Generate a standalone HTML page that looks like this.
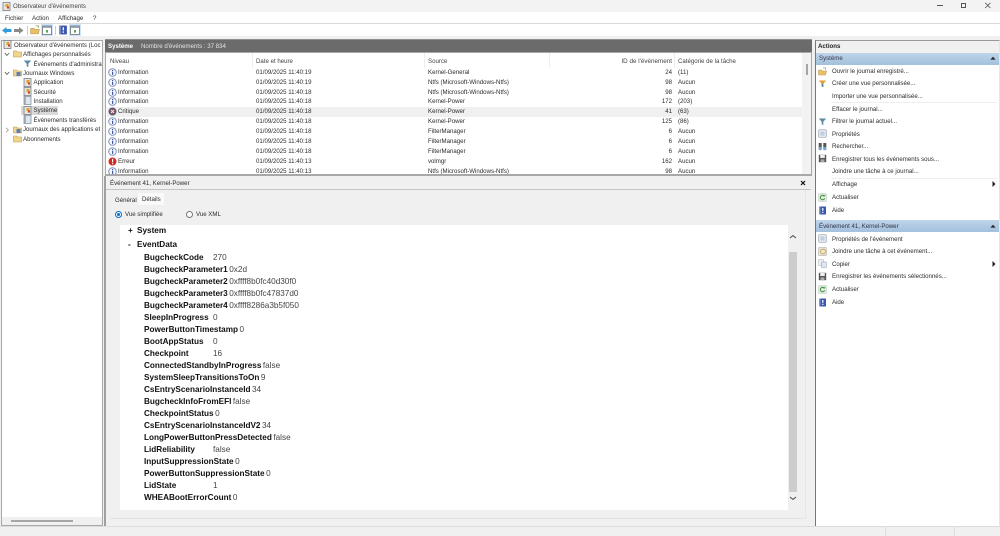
<!DOCTYPE html>
<html lang="fr"><head><meta charset="utf-8"><title>Observateur d'événements</title>
<style>
html,body{margin:0;padding:0;width:1000px;height:536px;overflow:hidden;background:#f0f0f0}
body{font-family:"Liberation Sans",sans-serif;font-size:6.1px;color:#2c2c2c;position:relative;filter:blur(.25px)}
.a,.a *{box-sizing:border-box}
.a{position:absolute;white-space:nowrap}
.t{position:absolute;white-space:nowrap;line-height:10px;height:10px}
svg.i{position:absolute;width:9px;height:9px}
.r{position:absolute;left:0;right:0;height:10px}
.r .t{top:0}
.c1{left:12px}.c2{left:150px}.c3{left:322px}.c5{left:572px}
.d{position:absolute;left:144px;height:12px;line-height:12px;white-space:nowrap;font-size:8.2px;color:#444}
.d b{display:inline-block;min-width:67.5px;color:#111;margin-right:1.5px}
</style></head><body>
<svg width="0" height="0" style="position:absolute"><defs>
<symbol id="info" viewBox="0 0 9 9"><circle cx="4.5" cy="4.5" r="3.8" fill="#f4f6fb" stroke="#7f90b8" stroke-width="1"/><rect x="4" y="2" width="1.2" height="1.1" fill="#3f5a9c"/><rect x="4" y="3.8" width="1.2" height="3.1" fill="#3f5a9c"/></symbol>
<symbol id="crit" viewBox="0 0 9 9"><circle cx="4.5" cy="4.5" r="4" fill="#5b5f78"/><circle cx="4.5" cy="4.5" r="2.2" fill="#b03a4c"/><path d="M3 3l3 3M6 3l-3 3" stroke="#eee" stroke-width=".9"/></symbol>
<symbol id="err" viewBox="0 0 9 9"><circle cx="4.5" cy="4.5" r="4" fill="#d42a20"/><rect x="4" y="1.8" width="1.2" height="3.4" fill="#fff"/><rect x="4" y="6" width="1.2" height="1.2" fill="#fff"/></symbol>
<symbol id="log" viewBox="0 0 9 9"><rect x="1" y="0.5" width="7" height="8" fill="#dfe6ee" stroke="#8a93a0" stroke-width=".8"/><rect x="1.4" y="1" width="1.4" height="7" fill="#9aa5b3"/></symbol>
<symbol id="logw" viewBox="0 0 9 9"><rect x="1" y="0.5" width="7" height="8" fill="#e8e4d8" stroke="#77808c" stroke-width=".8"/><rect x="3.5" y="2" width="3" height="3" fill="#d8a33c"/><rect x="5" y="4.5" width="2" height="2" fill="#c8392c"/></symbol>
<symbol id="fold" viewBox="0 0 9 9"><path d="M.5 2h3l1 1h4v5h-8z" fill="#f0d68a" stroke="#b99a4e" stroke-width=".6"/></symbol>
<symbol id="foldb" viewBox="0 0 9 9"><path d="M.5 2h3l1 1h4v5h-8z" fill="#f0d68a" stroke="#b99a4e" stroke-width=".6"/><rect x="3.5" y="4" width="4" height="4" fill="#5c7fb8"/></symbol>
<symbol id="filt" viewBox="0 0 9 9"><path d="M.8 1.5h7.4L5.3 4.8V8.2L3.7 7.2V4.8z" fill="#5e8aa8"/></symbol>
<symbol id="filty" viewBox="0 0 9 9"><path d="M.8 1.5h7.4L5.3 4.8V8.2L3.7 7.2V4.8z" fill="#e0a030"/><path d="M3.7 4.8h1.6v3.4l-1.6-1z" fill="#4f7d9b"/></symbol>
<symbol id="open" viewBox="0 0 9 9"><path d="M.5 3h3l1 1h4l-1 4h-7z" fill="#e8c068" stroke="#b99a4e" stroke-width=".5"/><path d="M5 .8h2.5v2" fill="none" stroke="#8aa04a" stroke-width=".7"/></symbol>
<symbol id="prop" viewBox="0 0 9 9"><rect x=".7" y=".7" width="7.6" height="7.6" rx="1" fill="#e4e8ee" stroke="#9aa4b0" stroke-width=".7"/><rect x="2.5" y="2.5" width="4" height="4" fill="#bcd0e0"/></symbol>
<symbol id="find" viewBox="0 0 9 9"><rect x=".7" y="1" width="3" height="4.5" fill="#555"/><rect x="5.3" y="1" width="3" height="4.5" fill="#555"/><circle cx="2.2" cy="6.6" r="1.7" fill="#7ba4cc"/><circle cx="6.8" cy="6.6" r="1.7" fill="#7ba4cc"/></symbol>
<symbol id="save" viewBox="0 0 9 9"><rect x=".8" y=".8" width="7.4" height="7.4" fill="#555"/><rect x="2.2" y="1" width="4.6" height="3" fill="#eee"/><rect x="2.6" y="5.4" width="3.8" height="2.8" fill="#aaa"/></symbol>
<symbol id="ref" viewBox="0 0 9 9"><rect x=".8" y=".8" width="7.4" height="7.4" fill="#e6eee6" stroke="#b5bdb5" stroke-width=".6"/><path d="M6.4 3.3A2.2 2.2 0 1 0 6.6 5.4" fill="none" stroke="#3f9a3f" stroke-width="1.1"/><path d="M5 3.4h2.2V1.6z" fill="#3f9a3f"/></symbol>
<symbol id="help" viewBox="0 0 9 9"><rect x="1" y=".5" width="7" height="8" fill="#3b58b0"/><rect x="1" y=".5" width="1.5" height="8" fill="#7f94d4"/><rect x="4.2" y="2" width="1.2" height="2.8" fill="#fff"/><rect x="4.2" y="5.8" width="1.2" height="1.2" fill="#fff"/></symbol>
<symbol id="task" viewBox="0 0 9 9"><rect x=".7" y=".7" width="7.6" height="7.6" fill="#e4e4dc" stroke="#a9a99c" stroke-width=".6"/><circle cx="5" cy="4.5" r="2.4" fill="#f3e7c4" stroke="#c08c3c" stroke-width=".7"/></symbol>
<symbol id="copy" viewBox="0 0 9 9"><rect x=".7" y=".7" width="4.6" height="5.6" fill="#eef0f4" stroke="#aab0bc" stroke-width=".6"/><rect x="3.5" y="3" width="4.8" height="5.4" fill="#dfe6f2" stroke="#9aa6bc" stroke-width=".6"/></symbol>
<symbol id="pane" viewBox="0 0 12 12"><rect x="0" y="0" width="12" height="12" fill="#cfe4f7"/><rect x="1.5" y="2" width="9" height="8.5" fill="#fff" stroke="#66727e" stroke-width=".8"/><rect x="1.5" y="2" width="9" height="1.8" fill="#8a97a5"/><rect x="5" y="6" width="2" height="2.6" fill="#5aa85a"/></symbol>
</defs></svg>

<!-- title bar -->
<div class="a" style="left:0;top:0;width:1000px;height:12px;background:#f3f3f3"></div>
<svg class="i" style="left:2px;top:2px"><use href="#logw"/></svg>
<div class="t" style="left:13px;top:2px;color:#444">Observateur d'événements</div>
<div class="a" style="left:937px;top:5px;width:6px;height:1px;background:#555"></div>
<div class="a" style="left:961px;top:3px;width:5px;height:5px;border:1px solid #555;background:#f3f3f3"></div>
<svg class="a" style="left:984px;top:2px" width="8" height="7"><path d="M1.2.8l5.2 5.2M6.4.8L1.2 6" stroke="#555" stroke-width=".8"/></svg>

<!-- menu -->
<div class="a" style="left:0;top:12px;width:1000px;height:12px;background:#fff;border-bottom:1px solid #d9d9d9"></div>
<div class="t" style="left:5px;top:14px">Fichier</div>
<div class="t" style="left:32px;top:14px">Action</div>
<div class="t" style="left:58px;top:14px">Affichage</div>
<div class="t" style="left:93px;top:14px">?</div>

<!-- toolbar -->
<div class="a" style="left:0;top:24px;width:1000px;height:12px;background:#fff"></div>
<svg class="a" style="left:2px;top:26px" width="10" height="9"><path d="M0 4.5L4.5 1v2h5v3h-5v2z" fill="#2f9bd8"/></svg>
<svg class="a" style="left:14px;top:26px" width="10" height="9"><path d="M9.5 4.5L5 1v2H0v3h5v2z" fill="#8a8a8a"/></svg>
<div class="a" style="left:27px;top:26px;width:1px;height:9px;background:#ccc"></div>
<svg class="a" style="left:30px;top:25px;width:10px;height:10px"><use href="#open"/></svg>
<svg class="a" style="left:41px;top:24px;width:12px;height:12px"><use href="#pane"/></svg>
<div class="a" style="left:55px;top:26px;width:1px;height:9px;background:#ccc"></div>
<svg class="a" style="left:58px;top:25px;width:10px;height:10px"><use href="#help"/></svg>
<svg class="a" style="left:69px;top:24px;width:12px;height:12px"><use href="#pane"/></svg>

<!-- left tree -->
<div class="a" style="left:1px;top:40px;width:102px;height:486px;background:#fff;border:1px solid #a8a8a8">
  <div class="a" style="left:0;bottom:0;width:100px;height:8px;background:#f0f0f0"></div>
  <div class="a" style="left:9px;bottom:3px;width:62px;height:2px;background:#a6a6a6"></div>
</div>
<svg class="i" style="left:3px;top:40px"><use href="#logw"/></svg><div class="t" style="left:14px;top:41px">Observateur d'événements (Loc</div>
<svg class="a" style="left:4px;top:52px" width="6" height="5"><path d="M.8 1l2.2 2.4L5.2 1" fill="none" stroke="#555" stroke-width=".8"/></svg>
<svg class="i" style="left:13px;top:49px"><use href="#fold"/></svg><div class="t" style="left:23px;top:50px">Affichages personnalisés</div>
<svg class="i" style="left:23px;top:59px"><use href="#filt"/></svg><div class="t" style="left:33.5px;top:60px">Événements d'administra</div>
<svg class="a" style="left:4px;top:71px" width="6" height="5"><path d="M.8 1l2.2 2.4L5.2 1" fill="none" stroke="#555" stroke-width=".8"/></svg>
<svg class="i" style="left:13px;top:68px"><use href="#foldb"/></svg><div class="t" style="left:23px;top:69px">Journaux Windows</div>
<svg class="i" style="left:23px;top:78px"><use href="#logw"/></svg><div class="t" style="left:33.5px;top:78px">Application</div>
<svg class="i" style="left:23px;top:87px"><use href="#logw"/></svg><div class="t" style="left:33.5px;top:88px">Sécurité</div>
<svg class="i" style="left:23px;top:96px"><use href="#log"/></svg><div class="t" style="left:33.5px;top:97px">Installation</div>
<div class="a" style="left:21px;top:106px;width:37px;height:9px;background:#d9d9d9"></div>
<svg class="i" style="left:23px;top:106px"><use href="#logw"/></svg><div class="t" style="left:33.5px;top:106px">Système</div>
<svg class="i" style="left:23px;top:115px"><use href="#log"/></svg><div class="t" style="left:33.5px;top:116px">Événements transférés</div>
<svg class="a" style="left:5px;top:127px" width="5" height="6"><path d="M1 .8l2.4 2.2L1 5.2" fill="none" stroke="#999" stroke-width=".8"/></svg>
<svg class="i" style="left:13px;top:125px"><use href="#foldb"/></svg><div class="t" style="left:23px;top:125px">Journaux des applications et</div>
<svg class="i" style="left:13px;top:134px"><use href="#fold"/></svg><div class="t" style="left:23px;top:135px">Abonnements</div>

<!-- center header -->
<div class="a" style="left:105px;top:39px;width:707px;height:13px;background:#6b6b6b;border-top:1px solid #8f8f8f"></div>
<div class="t" style="left:108px;top:42px;color:#fff;font-weight:bold">Système</div>
<div class="t" style="left:141px;top:42px;color:#e4e4e4">Nombre d'événements : 37 834</div>

<!-- list -->
<div class="a" style="left:105px;top:52px;width:707px;height:122px;background:#fff;border:1px solid #a8a8a8;border-bottom:0;overflow:hidden">
  <div class="t" style="left:4px;top:4px;color:#444">Niveau</div>
  <div class="a" style="left:146px;top:0;width:1px;height:15px;background:#eee"></div>
  <div class="t" style="left:150px;top:4px;color:#444">Date et heure</div>
  <div class="a" style="left:318px;top:0;width:1px;height:15px;background:#eee"></div>
  <div class="t" style="left:322px;top:4px;color:#444">Source</div>
  <div class="a" style="left:443px;top:0;width:1px;height:15px;background:#eee"></div>
  <div class="t" style="right:139px;top:4px;color:#444;font-size:6.3px">ID de l'événement</div>
  <div class="a" style="left:568px;top:0;width:1px;height:15px;background:#eee"></div>
  <div class="t" style="left:572px;top:4px;color:#444">Catégorie de la tâche</div>
  <div class="a" style="left:696px;top:0;width:9px;height:122px;background:#f2f2f2"></div>
  <div class="a" style="left:700px;top:11px;width:2px;height:11px;background:#a6a6a6"></div>
  <div class="a" style="left:1px;top:54px;width:695px;height:10px;background:#f0f0f0"></div>
</div>
<div class="a" style="left:105px;top:174px;width:707px;height:2px;background:#a8a8a8"></div>
<div class="a" style="left:106px;top:68px;width:696px;height:106px;overflow:hidden">
  <div class="r" style="top:-0.5px"><svg class="i" style="left:2px"><use href="#info"/></svg><div class="t c1">Information</div><div class="t c2">01/09/2025 11:40:19</div><div class="t c3">Kernel-General</div><div class="t" style="right:130px">24</div><div class="t c5">(11)</div></div>
  <div class="r" style="top:10px"><svg class="i" style="left:2px"><use href="#info"/></svg><div class="t c1">Information</div><div class="t c2">01/09/2025 11:40:19</div><div class="t c3">Ntfs (Microsoft-Windows-Ntfs)</div><div class="t" style="right:130px">98</div><div class="t c5">Aucun</div></div>
  <div class="r" style="top:20px"><svg class="i" style="left:2px"><use href="#info"/></svg><div class="t c1">Information</div><div class="t c2">01/09/2025 11:40:18</div><div class="t c3">Ntfs (Microsoft-Windows-Ntfs)</div><div class="t" style="right:130px">98</div><div class="t c5">Aucun</div></div>
  <div class="r" style="top:29px"><svg class="i" style="left:2px"><use href="#info"/></svg><div class="t c1">Information</div><div class="t c2">01/09/2025 11:40:18</div><div class="t c3">Kernel-Power</div><div class="t" style="right:130px">172</div><div class="t c5">(203)</div></div>
  <div class="r" style="top:39px"><svg class="i" style="left:2px"><use href="#crit"/></svg><div class="t c1">Critique</div><div class="t c2">01/09/2025 11:40:18</div><div class="t c3">Kernel-Power</div><div class="t" style="right:130px">41</div><div class="t c5">(63)</div></div>
  <div class="r" style="top:49px"><svg class="i" style="left:2px"><use href="#info"/></svg><div class="t c1">Information</div><div class="t c2">01/09/2025 11:40:18</div><div class="t c3">Kernel-Power</div><div class="t" style="right:130px">125</div><div class="t c5">(86)</div></div>
  <div class="r" style="top:59px"><svg class="i" style="left:2px"><use href="#info"/></svg><div class="t c1">Information</div><div class="t c2">01/09/2025 11:40:18</div><div class="t c3">FilterManager</div><div class="t" style="right:130px">6</div><div class="t c5">Aucun</div></div>
  <div class="r" style="top:69px"><svg class="i" style="left:2px"><use href="#info"/></svg><div class="t c1">Information</div><div class="t c2">01/09/2025 11:40:18</div><div class="t c3">FilterManager</div><div class="t" style="right:130px">6</div><div class="t c5">Aucun</div></div>
  <div class="r" style="top:79px"><svg class="i" style="left:2px"><use href="#info"/></svg><div class="t c1">Information</div><div class="t c2">01/09/2025 11:40:18</div><div class="t c3">FilterManager</div><div class="t" style="right:130px">6</div><div class="t c5">Aucun</div></div>
  <div class="r" style="top:89px"><svg class="i" style="left:2px"><use href="#err"/></svg><div class="t c1">Erreur</div><div class="t c2">01/09/2025 11:40:13</div><div class="t c3">volmgr</div><div class="t" style="right:130px">162</div><div class="t c5">Aucun</div></div>
  <div class="r" style="top:99px"><svg class="i" style="left:2px"><use href="#info"/></svg><div class="t c1">Information</div><div class="t c2">01/09/2025 11:40:13</div><div class="t c3">Ntfs (Microsoft-Windows-Ntfs)</div><div class="t" style="right:130px">98</div><div class="t c5">Aucun</div></div>
</div>

<!-- detail -->
<div class="a" style="left:104px;top:176px;width:2px;height:350px;background:#a0a0a0"></div>
<div class="a" style="left:110px;top:518px;width:695px;height:1px;background:#e2e2e2"></div>
<div class="a" style="left:805px;top:190px;width:1px;height:329px;background:#e6e6e6"></div>
<div class="a" style="left:106px;top:189px;width:705px;height:1px;background:#c4c4c4"></div>
<div class="t" style="left:110px;top:179px">Événement 41, Kernel-Power</div>
<svg class="a" style="left:800px;top:180px" width="6" height="6"><path d="M1 1l4 4M5 1L1 5" stroke="#111" stroke-width="1.2"/></svg>
<div class="t" style="left:115px;top:196px">Général</div>
<div class="a" style="left:138px;top:193px;width:26px;height:12px;background:#fafafa"></div>
<div class="t" style="left:142px;top:195px">Détails</div>
<div class="a" style="left:115px;top:211px;width:7px;height:7px;border-radius:50%;border:1px solid #0a6cc0;background:#fff"></div>
<div class="a" style="left:117px;top:213px;width:3px;height:3px;border-radius:50%;background:#0a6cc0"></div>
<div class="t" style="left:125px;top:210px">Vue simplifiée</div>
<div class="a" style="left:186px;top:211px;width:7px;height:7px;border-radius:50%;border:1px solid #777;background:#fff"></div>
<div class="t" style="left:196px;top:210px">Vue XML</div>

<div class="a" style="left:120px;top:225px;width:668px;height:285px;background:#fff"></div>
<div class="a" style="left:789px;top:252px;width:8px;height:240px;background:#cdcdcd"></div>
<svg class="a" style="left:789px;top:234px" width="8" height="6"><path d="M1 4l3-2.4L7 4" fill="none" stroke="#555" stroke-width="1.1"/></svg>
<svg class="a" style="left:789px;top:495px" width="8" height="6"><path d="M1 2l3 2.4L7 2" fill="none" stroke="#555" stroke-width="1.1"/></svg>

<div class="t" style="left:128px;top:226px;font-size:8.2px;font-weight:bold;color:#111">+</div>
<div class="t" style="left:137px;top:226px;font-size:8.2px;font-weight:bold;color:#111">System</div>
<div class="t" style="left:128px;top:240px;font-size:8.2px;font-weight:bold;color:#111">-</div>
<div class="t" style="left:137px;top:240px;font-size:8.2px;font-weight:bold;color:#111">EventData</div>

<div class="d" style="top:252px"><b>BugcheckCode</b>270</div>
<div class="d" style="top:264px"><b>BugcheckParameter1</b>0x2d</div>
<div class="d" style="top:276px"><b>BugcheckParameter2</b>0xffff8b0fc40d30f0</div>
<div class="d" style="top:288px"><b>BugcheckParameter3</b>0xffff8b0fc47837d0</div>
<div class="d" style="top:300px"><b>BugcheckParameter4</b>0xffff8286a3b5f050</div>
<div class="d" style="top:312px"><b>SleepInProgress</b>0</div>
<div class="d" style="top:324px"><b>PowerButtonTimestamp</b>0</div>
<div class="d" style="top:336px"><b>BootAppStatus</b>0</div>
<div class="d" style="top:348px"><b>Checkpoint</b>16</div>
<div class="d" style="top:360px"><b>ConnectedStandbyInProgress</b>false</div>
<div class="d" style="top:372px"><b>SystemSleepTransitionsToOn</b>9</div>
<div class="d" style="top:384px"><b>CsEntryScenarioInstanceId</b>34</div>
<div class="d" style="top:396px"><b>BugcheckInfoFromEFI</b>false</div>
<div class="d" style="top:408px"><b>CheckpointStatus</b>0</div>
<div class="d" style="top:420px"><b>CsEntryScenarioInstanceIdV2</b>34</div>
<div class="d" style="top:432px"><b>LongPowerButtonPressDetected</b>false</div>
<div class="d" style="top:444px"><b>LidReliability</b>false</div>
<div class="d" style="top:456px"><b>InputSuppressionState</b>0</div>
<div class="d" style="top:468px"><b>PowerButtonSuppressionState</b>0</div>
<div class="d" style="top:480px"><b>LidState</b>1</div>
<div class="d" style="top:492px"><b>WHEABootErrorCount</b>0</div>

<!-- actions -->
<div class="a" style="left:815px;top:40px;width:185px;height:486px;background:#fff;border-left:1px solid #777;border-top:1px solid #999;border-right:1px solid #e6e6e6"></div>
<div class="a" style="left:816px;top:41px;width:183px;height:12px;background:#f0f0f0"></div>
<div class="t" style="left:818px;top:42px;font-weight:bold;color:#222">Actions</div>
<div class="a" style="left:816px;top:53px;width:183px;height:12px;background:linear-gradient(#bdd4ea,#a3c0dc)"></div>
<div class="t" style="left:819px;top:54px;color:#334">Système</div>
<svg class="a" style="left:990px;top:56px" width="6" height="5"><path d="M3 .8L5.6 3.6H.4z" fill="#222"/></svg>
<svg class="i" style="left:818px;top:67px"><use href="#open"/></svg><div class="t" style="left:832px;top:67px">Ouvrir le journal enregistré...</div>
<svg class="i" style="left:818px;top:79px"><use href="#filty"/></svg><div class="t" style="left:832px;top:79px">Créer une vue personnalisée...</div>
<div class="t" style="left:832px;top:92px">Importer une vue personnalisée...</div>
<div class="a" style="left:831px;top:102px;width:166px;height:1px;background:#eee"></div>
<div class="t" style="left:832px;top:105px">Effacer le journal...</div>
<svg class="i" style="left:818px;top:117px"><use href="#filt"/></svg><div class="t" style="left:832px;top:117px">Filtrer le journal actuel...</div>
<svg class="i" style="left:818px;top:129px"><use href="#prop"/></svg><div class="t" style="left:832px;top:130px">Propriétés</div>
<svg class="i" style="left:818px;top:142px"><use href="#find"/></svg><div class="t" style="left:832px;top:142px">Rechercher...</div>
<svg class="i" style="left:818px;top:154px"><use href="#save"/></svg><div class="t" style="left:832px;top:155px">Enregistrer tous les événements sous...</div>
<div class="t" style="left:832px;top:167px">Joindre une tâche à ce journal...</div>
<div class="a" style="left:831px;top:178px;width:166px;height:1px;background:#eee"></div>
<div class="t" style="left:832px;top:180px">Affichage</div>
<svg class="a" style="left:992px;top:181px" width="4" height="6"><path d="M.5 0L3.5 3L.5 6z" fill="#222"/></svg>
<svg class="i" style="left:818px;top:193px"><use href="#ref"/></svg><div class="t" style="left:832px;top:193px">Actualiser</div>
<svg class="i" style="left:818px;top:206px"><use href="#help"/></svg><div class="t" style="left:832px;top:206px">Aide</div>
<div class="a" style="left:816px;top:220px;width:183px;height:12px;background:linear-gradient(#bdd4ea,#a3c0dc)"></div>
<div class="t" style="left:819px;top:222px;color:#334">Événement 41, Kernel-Power</div>
<svg class="a" style="left:990px;top:224px" width="6" height="5"><path d="M3 .8L5.6 3.6H.4z" fill="#222"/></svg>
<svg class="i" style="left:818px;top:234px"><use href="#prop"/></svg><div class="t" style="left:832px;top:235px">Propriétés de l'événement</div>
<svg class="i" style="left:818px;top:247px"><use href="#task"/></svg><div class="t" style="left:832px;top:247px">Joindre une tâche à cet événement...</div>
<svg class="i" style="left:818px;top:259px"><use href="#copy"/></svg><div class="t" style="left:832px;top:260px">Copier</div>
<svg class="a" style="left:992px;top:261px" width="4" height="6"><path d="M.5 0L3.5 3L.5 6z" fill="#222"/></svg>
<svg class="i" style="left:818px;top:272px"><use href="#save"/></svg><div class="t" style="left:832px;top:272px">Enregistrer les événements sélectionnés...</div>
<svg class="i" style="left:818px;top:285px"><use href="#ref"/></svg><div class="t" style="left:832px;top:285px">Actualiser</div>
<svg class="i" style="left:818px;top:298px"><use href="#help"/></svg><div class="t" style="left:832px;top:298px">Aide</div>

<!-- status -->
<div class="a" style="left:0;top:526px;width:1000px;height:10px;background:#f0f0f0;border-top:1px solid #dcdcdc"></div>
<div class="a" style="left:885px;top:527px;width:1px;height:9px;background:#dcdcdc"></div>
<div class="a" style="left:954px;top:527px;width:1px;height:9px;background:#dcdcdc"></div>
</body></html>
